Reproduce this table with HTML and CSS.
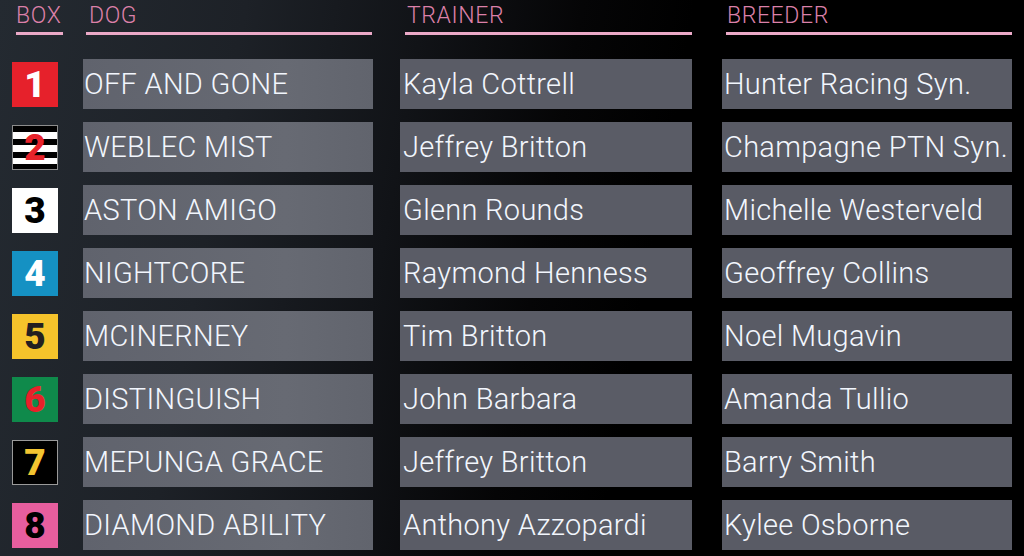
FILE: index.html
```html
<!DOCTYPE html>
<html lang="en">
<head>
<meta charset="utf-8">
<title>Field</title>
<link rel="stylesheet" href="styles.css">
</head>
<body>
<div class="page">
  <div class="head">
    <div class="h h-box">BOX</div>
    <div class="h h-dog">DOG</div>
    <div class="h h-trainer">TRAINER</div>
    <div class="h h-breeder">BREEDER</div>
  </div>
  <div class="rows">
    <div class="row">
      <div class="box b1">1</div>
      <div class="cell dog">OFF AND GONE</div>
      <div class="cell trainer">Kayla Cottrell</div>
      <div class="cell breeder">Hunter Racing Syn.</div>
    </div>
    <div class="row">
      <div class="box b2">2</div>
      <div class="cell dog">WEBLEC MIST</div>
      <div class="cell trainer">Jeffrey Britton</div>
      <div class="cell breeder">Champagne PTN Syn.</div>
    </div>
    <div class="row">
      <div class="box b3">3</div>
      <div class="cell dog">ASTON AMIGO</div>
      <div class="cell trainer">Glenn Rounds</div>
      <div class="cell breeder">Michelle Westerveld</div>
    </div>
    <div class="row">
      <div class="box b4">4</div>
      <div class="cell dog">NIGHTCORE</div>
      <div class="cell trainer">Raymond Henness</div>
      <div class="cell breeder">Geoffrey Collins</div>
    </div>
    <div class="row">
      <div class="box b5">5</div>
      <div class="cell dog">MCINERNEY</div>
      <div class="cell trainer">Tim Britton</div>
      <div class="cell breeder">Noel Mugavin</div>
    </div>
    <div class="row">
      <div class="box b6">6</div>
      <div class="cell dog">DISTINGUISH</div>
      <div class="cell trainer">John Barbara</div>
      <div class="cell breeder">Amanda Tullio</div>
    </div>
    <div class="row">
      <div class="box b7">7</div>
      <div class="cell dog">MEPUNGA GRACE</div>
      <div class="cell trainer">Jeffrey Britton</div>
      <div class="cell breeder">Barry Smith</div>
    </div>
    <div class="row">
      <div class="box b8">8</div>
      <div class="cell dog">DIAMOND ABILITY</div>
      <div class="cell trainer">Anthony Azzopardi</div>
      <div class="cell breeder">Kylee Osborne</div>
    </div>
  </div>
</div>
</body>
</html>
```

FILE: styles.css
```css
html, body {
  margin: 0;
  padding: 0;
}
body {
  width: 1024px;
  height: 556px;
  overflow: hidden;
  background: linear-gradient(100deg, #242a31 0%, #1d2127 22%, #111317 38%, #050506 52%, #000 62%);
  font-family: Roboto, "Liberation Sans", sans-serif;
}
.page {
  display: flex;
  flex-direction: column;
}
.head {
  display: flex;
  align-items: flex-start;
}
.h {
  box-sizing: border-box;
  padding-top: 4px;
  padding-bottom: 5px;
  line-height: 23px;
  font-size: 23px;
  font-weight: 300;
  letter-spacing: 0.6px;
  color: #dc80a9;
  border-bottom: 3px solid #eba9c7;
}
.h-box { margin-left: 16px; width: 47px; }
.h-dog { margin-left: 23px; width: 286px; padding-left: 3px; }
.h-trainer { margin-left: 33px; width: 287px; padding-left: 2px; }
.h-breeder { margin-left: 34px; width: 286px; padding-left: 1px; }

.rows {
  display: flex;
  flex-direction: column;
  gap: 13px;
  margin-top: 24px;
}
.row {
  display: flex;
  align-items: center;
  height: 50px;
}
.box {
  box-sizing: border-box;
  margin-left: 12px;
  width: 46px;
  height: 45px;
  display: flex;
  align-items: center;
  justify-content: center;
  font-size: 37px;
  font-weight: 900;
  line-height: 1;
  padding-top: 1px;
}
.b1 { background: #e6212b; color: #fff; }
.b2 {
  background: repeating-linear-gradient(to bottom, #000 0 6.4px, #fff 6.4px 12.8px);
  border: 1px solid #8c8c8c;
  color: #e8232b;
}
.b3 { background: #fff; color: #000; }
.b4 { background: #1591c3; color: #fff; }
.b5 { background: #f5c32b; color: #231f20; }
.b6 { background: #0f8a4b; color: #e8212a; }
.b7 { background: #000; border: 1px solid #9a9a9a; color: #f3c531; }
.b8 { background: #e75e9e; color: #000; }

.cell {
  box-sizing: border-box;
  height: 50px;
  line-height: 50px;
  padding: 0 0 1px 1px;
  font-size: 29px;
  font-weight: 300;
  letter-spacing: 0.3px;
  color: #f2f6fd;
  white-space: nowrap;
  overflow: hidden;
}
.dog {
  margin-left: 25px;
  width: 290px;
  background: linear-gradient(to right, #60636d, #676a73 70%, #61646d);
}
.trainer {
  margin-left: 27px;
  width: 292px;
  padding-left: 3px;
  background: #5a5c66;
}
.breeder {
  margin-left: 30px;
  width: 290px;
  padding-left: 2px;
  background: #595b65;
}
```
